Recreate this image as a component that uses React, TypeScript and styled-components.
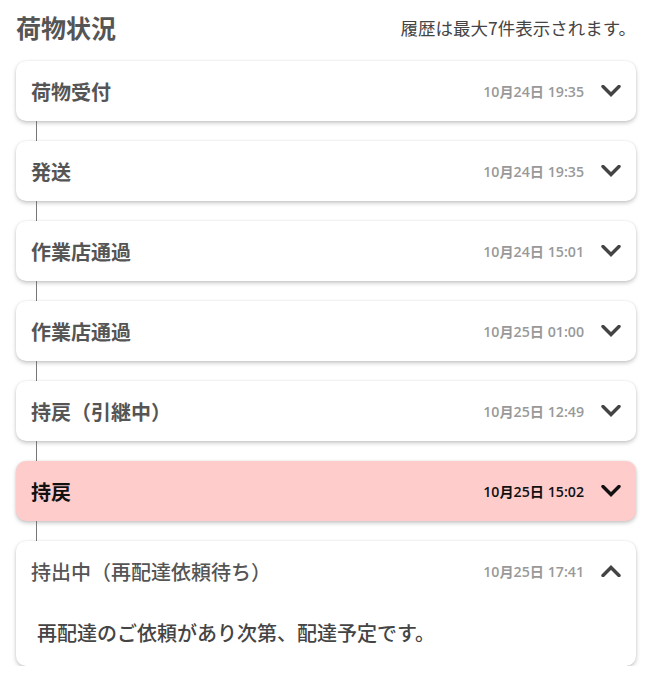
import React from "react";
import styled, { createGlobalStyle } from "styled-components";

const Global = createGlobalStyle`
  html, body { margin: 0; padding: 0; background: #fff; }
  body { font-family: "Open Sans", "Noto Sans CJK JP", sans-serif; }
`;

const Page = styled.div`
  width: 620px;
  padding: 10px 19px 0 16px;
`;

const Header = styled.div`
  display: flex;
  align-items: center;
  justify-content: space-between;
  height: 34px;
  margin-bottom: 17px;
`;

const Title = styled.h1`
  margin: 0;
  font-family: "Noto Sans CJK JP", sans-serif;
  font-size: 25px;
  font-weight: 700;
  color: #555;
  line-height: 34px;
`;

const Note = styled.span`
  font-family: "Noto Sans CJK JP", sans-serif;
  font-size: 17.5px;
  color: #444;
  margin-right: 0;
`;

const List = styled.div`
  display: flex;
  flex-direction: column;
`;

const Connector = styled.div`
  height: 20px;
  margin-left: 20px;
  width: 0;
  border-left: 1.5px solid #777;
`;

const Card = styled.div<{ $alert?: boolean }>`
  background: ${(p) => (p.$alert ? "#ffcccc" : "#fff")};
  border-radius: 10px;
  box-shadow: 0 2px 4px rgba(0, 0, 0, 0.22), 0 0 2px rgba(0, 0, 0, 0.08);
`;

const Row = styled.div`
  display: flex;
  align-items: center;
  height: 60px;
  padding: 0 15px;
`;

const Label = styled.div<{ $alert?: boolean; $open?: boolean }>`
  flex: 1;
  font-family: "Noto Sans CJK JP", sans-serif;
  font-size: 20px;
  font-weight: ${(p) => (p.$open ? 500 : 700)};
  color: ${(p) => (p.$alert ? "#111" : "#555")};
`;

const DateText = styled.span<{ $alert?: boolean }>`
  font-family: "Open Sans", "Noto Sans CJK JP", sans-serif;
  font-size: 14.2px;
  font-weight: 600;
  color: ${(p) => (p.$alert ? "#111" : "#999")};
  margin-right: 17px;
`;

const Detail = styled.div`
  padding: 20px 21px 21px 21px;
  font-family: "Noto Sans CJK JP", sans-serif;
  font-size: 20px;
  font-weight: 500;
  color: #444;
  line-height: 24px;
`;

const Chevron = ({ up, color }: { up?: boolean; color: string }) => (
  <svg width="20" height="12" viewBox="0 0 20 12" style={{ flexShrink: 0 }}>
    <path
      d={up ? "M2 10.5 L10 2.5 L18 10.5" : "M2 1.5 L10 9.5 L18 1.5"}
      fill="none"
      stroke={color}
      strokeWidth="3.4"
      strokeLinecap="round"
      strokeLinejoin="miter"
    />
  </svg>
);

type Item = { label: string; date: string; alert?: boolean; open?: boolean; detail?: string };

const items: Item[] = [
  { label: "荷物受付", date: "10月24日 19:35" },
  { label: "発送", date: "10月24日 19:35" },
  { label: "作業店通過", date: "10月24日 15:01" },
  { label: "作業店通過", date: "10月25日 01:00" },
  { label: "持戻（引継中）", date: "10月25日 12:49" },
  { label: "持戻", date: "10月25日 15:02", alert: true },
  {
    label: "持出中（再配達依頼待ち）",
    date: "10月25日 17:41",
    open: true,
    detail: "再配達のご依頼があり次第、配達予定です。",
  },
];

export default function App() {
  return (
    <>
      <Global />
      <Page>
        <Header>
          <Title>荷物状況</Title>
          <Note>履歴は最大7件表示されます。</Note>
        </Header>
        <List>
          {items.map((it, i) => (
            <React.Fragment key={i}>
              {i > 0 && <Connector />}
              <Card $alert={it.alert}>
                <Row>
                  <Label $alert={it.alert} $open={it.open}>
                    {it.label}
                  </Label>
                  <DateText $alert={it.alert}>{it.date}</DateText>
                  <Chevron up={it.open} color={it.alert ? "#111" : "#444"} />
                </Row>
                {it.detail && <Detail>{it.detail}</Detail>}
              </Card>
            </React.Fragment>
          ))}
        </List>
      </Page>
    </>
  );
}
